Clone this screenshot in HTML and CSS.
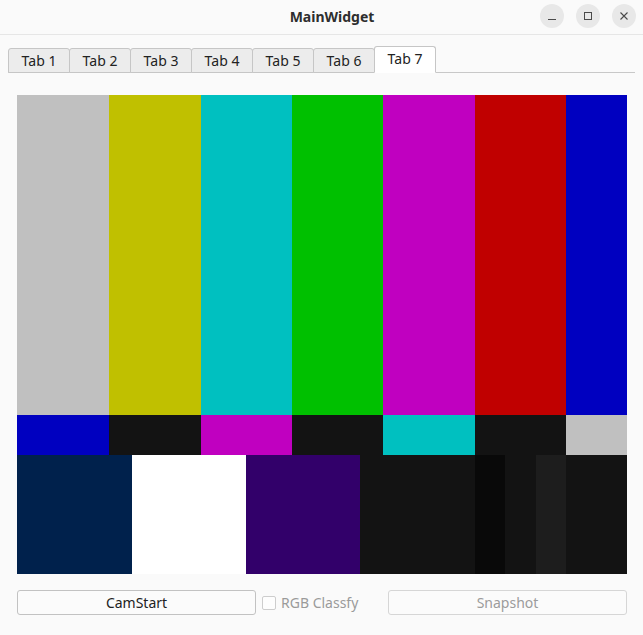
FILE: index.html
```html
<!DOCTYPE html>
<html>
<head>
<meta charset="utf-8">
<title>MainWidget</title>
<link rel="stylesheet" href="styles.css">
</head>
<body>
<div class="window">
  <header class="titlebar">
    <div class="title">MainWidget</div>
    <div class="controls">
      <span class="ctl"><svg width="24" height="24" viewBox="0 0 24 24"><path d="M8 15.5h8" stroke="#4a4a4a" stroke-width="1"/></svg></span>
      <span class="ctl"><svg width="24" height="24" viewBox="0 0 24 24"><rect x="8.5" y="8.5" width="7" height="7" fill="none" stroke="#4a4a4a" stroke-width="1"/></svg></span>
      <span class="ctl"><svg width="24" height="24" viewBox="0 0 24 24"><path d="M8.5 8.5l7 7M15.5 8.5l-7 7" stroke="#4a4a4a" stroke-width="1.1"/></svg></span>
    </div>
  </header>
  <main class="content">
    <div class="tabbar">
      <div class="tab">Tab 1</div>
      <div class="tab">Tab 2</div>
      <div class="tab">Tab 3</div>
      <div class="tab">Tab 4</div>
      <div class="tab">Tab 5</div>
      <div class="tab">Tab 6</div>
      <div class="tab active">Tab 7</div>
    </div>
    <div class="pane">
      <div class="bars">
        <div class="row top">
          <div class="c-grey"></div><div class="c-yellow"></div><div class="c-cyan"></div><div class="c-green"></div><div class="c-magenta"></div><div class="c-red"></div><div class="c-blue"></div>
        </div>
        <div class="row mid">
          <div class="c-blue"></div><div class="c-black"></div><div class="c-magenta"></div><div class="c-black"></div><div class="c-cyan"></div><div class="c-black"></div><div class="c-grey"></div>
        </div>
        <div class="row bottom">
          <div class="c-navy"></div><div class="c-white"></div><div class="c-purple"></div><div class="c-black"></div><div class="c-darker"></div><div class="c-black"></div><div class="c-lighter"></div><div class="c-black"></div>
        </div>
      </div>
      <div class="actions">
        <button class="btn">CamStart</button>
        <label class="check"><span class="box"></span><span class="check-label">RGB Classfy</span></label>
        <button class="btn disabled">Snapshot</button>
      </div>
    </div>
  </main>
</div>
</body>
</html>
```

FILE: styles.css
```css
* { box-sizing: border-box; }
html, body {
  margin: 0;
  padding: 0;
  background: #fafafa;
  font-family: "Noto Sans", "DejaVu Sans", sans-serif;
  font-size: 14px;
  color: #2b2b2b;
}
.window {
  width: 643px;
  height: 635px;
  background: #fafafa;
  overflow: hidden;
}
.titlebar {
  height: 35px;
  border-bottom: 1px solid #e6e6e6;
  display: flex;
  align-items: flex-start;
  background: #fafafa;
}
.title {
  flex: 1;
  padding-left: 124px;
  text-align: center;
  font-weight: bold;
  font-size: 14px;
  line-height: 33px;
  color: #2e2e2e;
}
.controls {
  display: flex;
  gap: 12px;
  padding: 4px 7px 0 0;
}
.ctl {
  width: 24px;
  height: 24px;
  border-radius: 50%;
  background: #e8e8e8;
  display: block;
}
.ctl svg { display: block; }
.content {
  padding: 11px 8px 0 8px;
}
.tabbar {
  display: flex;
  align-items: flex-end;
  height: 27px;
  border-bottom: 1px solid #c8c8c8;
}
.tab {
  width: 62px;
  height: 25px;
  margin-bottom: -1px;
  margin-left: -1px;
  border: 1px solid #c6c6c6;
  border-radius: 3px 3px 0 0;
  background: #ececec;
  text-align: center;
  line-height: 23px;
  font-size: 14px;
  color: #222;
}
.tab:first-child { margin-left: 0; width: 62px; }
.tab.active {
  height: 27px;
  background: #ffffff;
  border-bottom: 1px solid #ffffff;
  line-height: 24px;
}
.pane {
  padding: 22px 8px 0 9px;
}
.bars {
  width: 610px;
  height: 479px;
  display: flex;
  flex-direction: column;
}
.row { display: grid; }
.row.top, .row.mid {
  grid-template-columns: 92px 92px 91px 91px 92px 91px 61px;
}
.row.top { height: 320px; }
.row.mid { height: 40px; }
.row.bottom {
  height: 119px;
  grid-template-columns: 115px 114px 114px 115px 30px 31px 30px 61px;
}
.c-grey { background: #c0c0c0; }
.c-yellow { background: #c0c000; }
.c-cyan { background: #00c0c0; }
.c-green { background: #00c000; }
.c-magenta { background: #c000c0; }
.c-red { background: #c00000; }
.c-blue { background: #0000c0; }
.c-black { background: #131313; }
.c-navy { background: #00214c; }
.c-white { background: #ffffff; }
.c-purple { background: #32006a; }
.c-darker { background: #090909; }
.c-lighter { background: #1d1d1d; }
.actions {
  margin-top: 16px;
  width: 610px;
  display: grid;
  grid-template-columns: 239px 1fr 239px;
  align-items: center;
}
.btn {
  height: 25px;
  border: 1px solid #c2c2c2;
  border-radius: 3px;
  background: #fbfbfb;
  font-family: inherit;
  font-size: 14px;
  color: #222;
  padding: 0;
  line-height: 23px;
}
.btn.disabled {
  border-color: #d6d6d6;
  color: #9c9c9c;
}
.check {
  display: flex;
  align-items: center;
  gap: 5px;
  padding-left: 6px;
  color: #9a9a9a;
}
.box {
  width: 14px;
  height: 14px;
  border: 1px solid #cdcdcd;
  border-radius: 2px;
  background: #fdfdfd;
}
.check-label { line-height: 20px; }
```
